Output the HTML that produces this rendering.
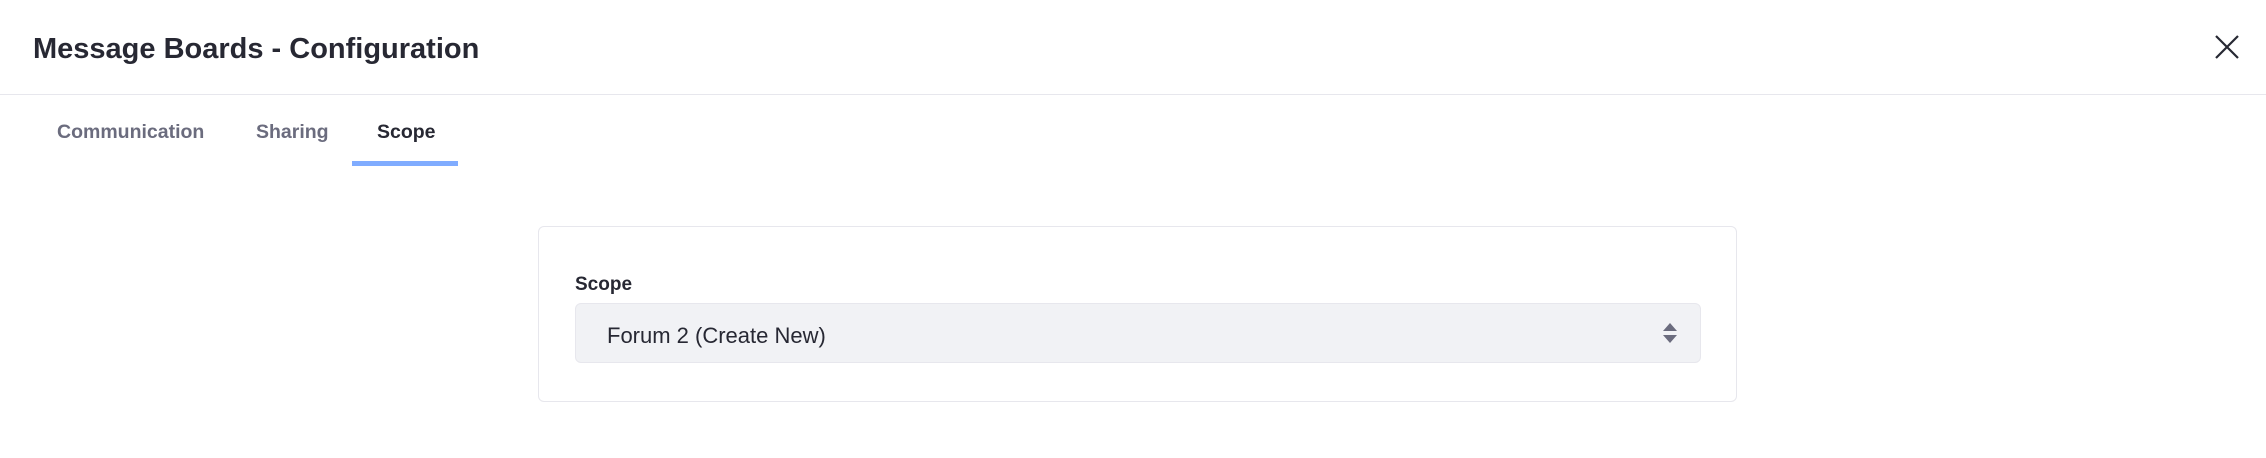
<!DOCTYPE html>
<html><head><style>
html,body{margin:0;padding:0;width:2266px;height:458px;background:#fff;overflow:hidden;font-family:"Liberation Sans",sans-serif;}
.t{position:absolute;white-space:nowrap;}
</style></head><body>
<div class="t" style="left:33px;top:35px;font-size:29px;line-height:29px;font-weight:bold;color:#272833;">Message Boards - Configuration</div>
<svg style="position:absolute;left:2215px;top:35px" width="24" height="24" viewBox="0 0 24 24"><path d="M1 1L23 23M23 1L1 23" stroke="#272833" stroke-width="2.2" fill="none"/></svg>
<div style="position:absolute;left:0;top:94px;width:2266px;height:1px;background:#e7e7ed;"></div>
<div class="t" style="left:57px;top:123px;font-size:19.5px;line-height:19.5px;font-weight:bold;color:#6b6c7e;">Communication</div>
<div class="t" style="left:256px;top:123px;font-size:19.5px;line-height:19.5px;font-weight:bold;color:#6b6c7e;">Sharing</div>
<div class="t" style="left:377px;top:123px;font-size:19.5px;line-height:19.5px;font-weight:bold;color:#272833;">Scope</div>
<div style="position:absolute;left:352px;top:161px;width:106px;height:5px;background:#80acff;"></div>
<div style="position:absolute;left:538px;top:226px;width:1197px;height:174px;border:1px solid #e7e7ed;border-radius:6px;"></div>
<div class="t" style="left:575px;top:275px;font-size:19px;line-height:19px;font-weight:bold;color:#272833;">Scope</div>
<div style="position:absolute;left:575px;top:303px;width:1124px;height:58px;border:1px solid #e7e7ed;background:#f1f2f5;border-radius:6px;"></div>
<div class="t" style="left:607px;top:325px;font-size:22px;line-height:22px;color:#272833;">Forum 2 (Create New)</div>
<svg style="position:absolute;left:1663px;top:323px" width="14" height="20" viewBox="0 0 14 20"><path d="M7 0L14 8H0Z M7 20L14 12H0Z" fill="#6b6c7e"/></svg>
</body></html>
